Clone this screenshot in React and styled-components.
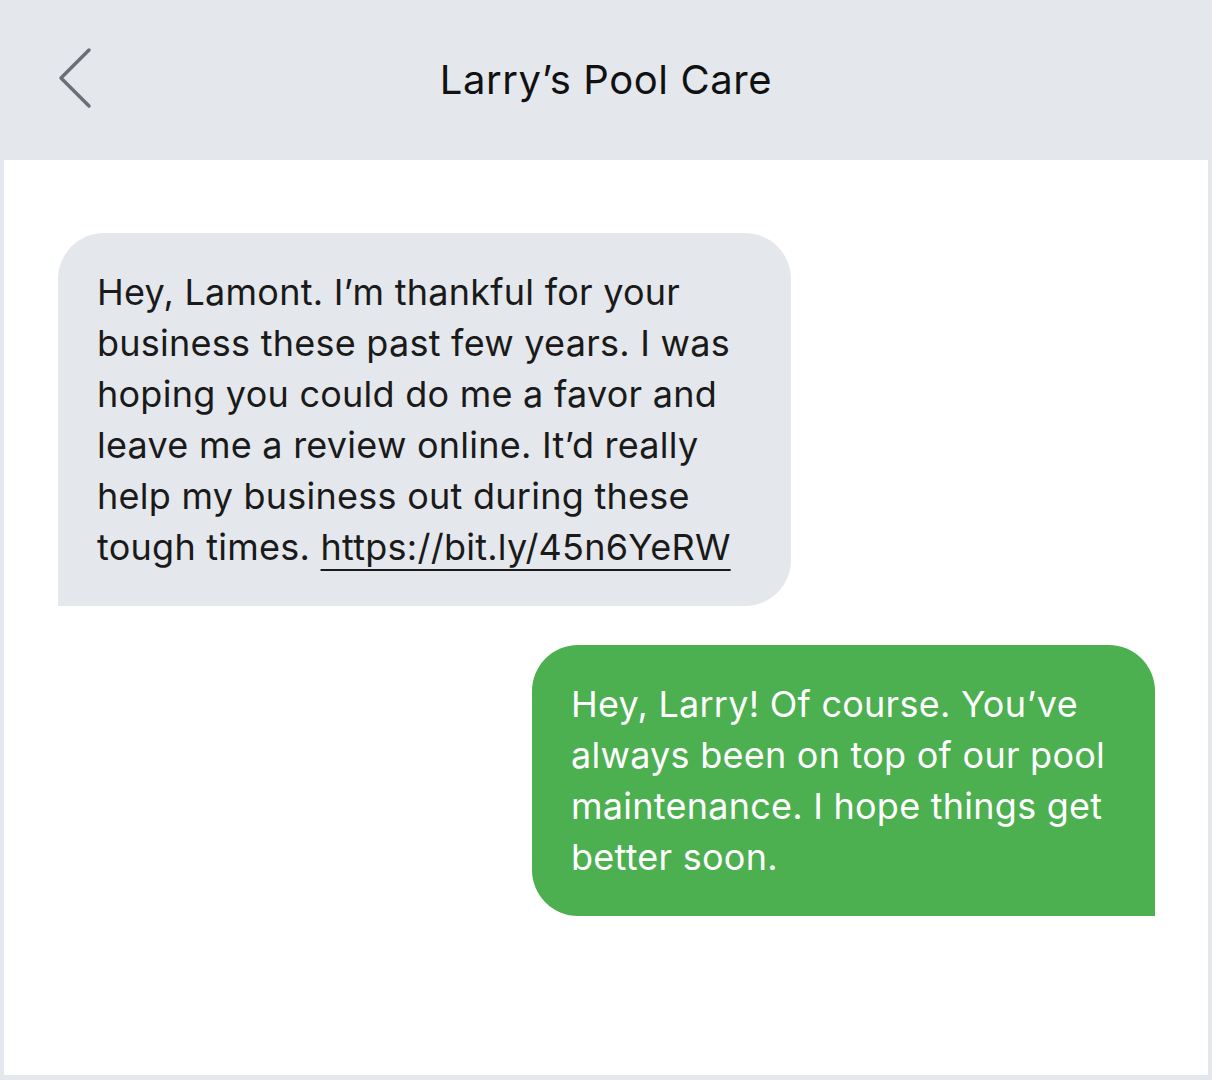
import React from "react";
import styled, { createGlobalStyle } from "styled-components";

const Global = createGlobalStyle`
  html, body { margin: 0; padding: 0; }
  body { background: #e4e7eb; font-family: Inter, "Noto Sans", sans-serif; }
`;

const Frame = styled.div`
  width: 1212px;
  height: 1080px;
  background: #e4e7eb;
  display: flex;
  flex-direction: column;
  box-sizing: border-box;
  padding: 0 4px 5px;
`;

const Header = styled.header`
  height: 160px;
  margin: 0 -4px;
  display: grid;
  grid-template-columns: 1fr auto 1fr;
  align-items: center;
  flex-shrink: 0;
`;

const BackButton = styled.button`
  justify-self: start;
  margin-left: 56px;
  margin-top: -4px;
  width: 40px;
  height: 64px;
  padding: 0;
  border: 0;
  background: transparent;
  display: flex;
  align-items: center;
  justify-content: center;
`;

const Title = styled.h1`
  margin: 0;
  font-size: 40px;
  font-weight: 400;
  color: #111;
  letter-spacing: 0.6px;
  margin-top: -2px;
`;

const Body = styled.main`
  flex: 1;
  background: #fff;
  display: flex;
  flex-direction: column;
  gap: 39px;
  padding: 73px 53px 0 54px;
`;

const Bubble = styled.div`
  box-sizing: border-box;
  width: ${(p) => p.$w}px;
  padding: 34px 39px 33px;
  font-size: 36px;
  line-height: 51px;
  letter-spacing: 0.25px;
  border-radius: 46px;
  align-self: ${(p) => (p.$out ? "flex-end" : "flex-start")};
  background: ${(p) => (p.$out ? "#4caf50" : "#e4e7eb")};
  color: ${(p) => (p.$out ? "#fff" : "#1a1a1a")};
  ${(p) => (p.$out ? "border-bottom-right-radius: 0;" : "border-bottom-left-radius: 0;")}
`;

const Link = styled.a`
  color: inherit;
  text-decoration: underline;
  text-decoration-thickness: 2px;
  text-underline-offset: 9px;
`;

export default function App() {
  return (
    <>
      <Global />
      <Frame>
        <Header>
          <BackButton aria-label="Back">
            <svg width="40" height="64" viewBox="0 0 40 64">
              <polyline
                points="33,4 5,32 33,60"
                fill="none"
                stroke="#6c6f76"
                strokeWidth="3.5"
                strokeLinecap="round"
                strokeLinejoin="round"
              />
            </svg>
          </BackButton>
          <Title>Larry’s Pool Care</Title>
          <div />
        </Header>
        <Body>
          <Bubble $w={733}>
            Hey, Lamont. I’m thankful for your
            <br />
            business these past few years. I was
            <br />
            hoping you could do me a favor and
            <br />
            leave me a review online. It’d really
            <br />
            help my business out during these
            <br />
            tough times. <Link href="#">https://bit.ly/45n6YeRW</Link>
          </Bubble>
          <Bubble $out $w={623}>
            Hey, Larry! Of course. You’ve
            <br />
            always been on top of our pool
            <br />
            maintenance. I hope things get
            <br />
            better soon.
          </Bubble>
        </Body>
      </Frame>
    </>
  );
}
